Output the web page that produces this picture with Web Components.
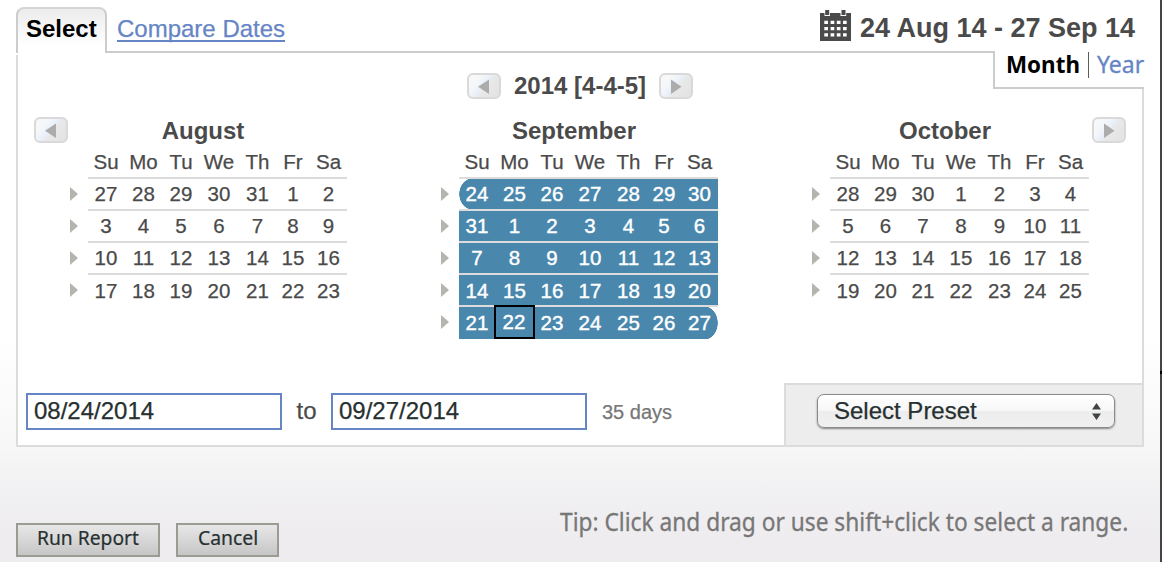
<!DOCTYPE html>
<html lang="en">
<head>
<meta charset="utf-8">
<title>Date range</title>
<style>
html,body{margin:0;height:100%}
body{font-family:"Liberation Sans",Arial,sans-serif;color:#4a4a4a;overflow:hidden}
</style>
</head>
<body>
<date-range-picker></date-range-picker>
<script>
const define = (name, html, setup) => {
  const tpl = document.createElement('template');
  customElements.define(name, class extends HTMLElement {
    connectedCallback() {
      if (this.shadowRoot) return;
      tpl.innerHTML = typeof html === 'function' ? html(this) : html;
      this.attachShadow({mode: 'open'}).appendChild(tpl.content.cloneNode(true));
      if (setup) setup(this);
    }
  });
};

/* Text set to an exact measure: the w attribute is its width in pixels. */
define('fit-text', el => `<style>
:host{display:inline-block;white-space:nowrap;width:${el.getAttribute('w')}px;flex:none}
span{display:inline-block;transform-origin:0 50%}
</style><span>${el.textContent}</span>`, el => {
  const s = el.shadowRoot.querySelector('span');
  s.style.transform = `scaleX(${el.getAttribute('w') / s.offsetWidth})`;
});

define('arrow-button', el => `<style>
:host{display:block;flex:none;width:34px;height:26px}
svg{display:block}
</style><svg width="34" height="26" viewBox="0 0 34 26">
<defs><linearGradient id="g" x1="0" y1="0.2" x2="1" y2="0.8"><stop offset=".1" stop-color="#f8f8f8"/><stop offset=".3" stop-color="#f3f6fa"/><stop offset=".45" stop-color="#e9f0fa"/><stop offset=".58" stop-color="#e8e8e8"/><stop offset="1" stop-color="#e3e3e3"/></linearGradient></defs>
<rect x="1" y="1" width="32" height="24" rx="5" fill="url(#g)" stroke="#d9d9d9" stroke-width="2"/>
<path d="${el.getAttribute('dir') === 'next' ? 'M12 6.500V21L22.500 13.700Z' : 'M22 6.500V21L11 13.700Z'}" fill="#acacac"/></svg>`);

define('calendar-icon', `<style>:host{display:block;width:31px;height:31px;flex:none}svg{display:block}</style>
<svg width="31" height="31" viewBox="0 0 31 31"><path fill="#4a4a4a" d="M0 3H4.500V6H10V3H20.500V6H26.200V3H31V31H0Z"/>
<path fill="#4a4a4a" d="M5.200 0H9.200V5H5.200ZM21.500 0H25.500V5H21.500Z"/>
<g fill="#fff"><path d="M4.300 10.700h3.700v3.300h-3.700zM10.600 10.700h3.700v3.300h-3.700zM16.800 10.700h3.700v3.300h-3.700zM23 10.700h3.700v3.300h-3.700zM4.300 17h3.700v3.300h-3.700zM10.600 17h3.700v3.300h-3.700zM16.800 17h3.700v3.300h-3.700zM23 17h3.700v3.300h-3.700zM4.300 23.200h3.700v3.300h-3.700zM10.600 23.200h3.700v3.300h-3.700zM16.800 23.200h3.700v3.300h-3.700zM23 23.200h3.700v3.300h-3.700z"/></g></svg>`);

define('month-grid', el => {
  const rows = el.getAttribute('weeks').split('|').map(r => r.split(' '));
  const sel = el.hasAttribute('selected');
  const week = (r, i) => `<div class="week${i === rows.length - 1 ? ' last' : ''}${i > 2 ? ' low' : ''}">
    <svg width="8" height="14" viewBox="0 0 8 14"><path d="M0 0L8 7L0 14Z" fill="#b5b5ae"/></svg>
    <div class="days${sel && i === 0 ? ' from' : ''}${sel && i === 4 ? ' to' : ''}">${r.map(d => `<span${sel && i === 4 && d === '22' ? ' class="today"' : ''}>${d}</span>`).join('')}</div></div>`;
  return `<style>
:host{display:block;flex:none;width:279px}
h3{margin:0 9px 0 0;font-size:24px;line-height:28px;height:30px;text-align:center}
.head,.days{display:grid;grid-template-columns:36px 39px 36px 40px 37px 34px 37px;text-align:center;font-size:20.5px;-webkit-text-stroke:.25px}
.head{margin-left:20px;height:30px;line-height:30px;border-bottom:2px solid #dcdcdc}
.week{display:flex}
.week svg{flex:none;margin:8px 10px 0 2px}
.days{line-height:30px;height:30px;border-bottom:2px solid #dcdcdc}
.low .days{line-height:31px}
.last .days{border:0;height:32px;line-height:32px}
.sel .days{background:#4987ad padding-box;color:#fff}
.sel .days{-webkit-text-stroke:.4px #fff}
.sel .from{background:radial-gradient(ellipse 14px 16px at 14px 15px,#4987ad 96%,#fff 100%) 0 0/14px 30px no-repeat,linear-gradient(#4987ad,#4987ad) 14px 0/245px 30px no-repeat}
.sel .to{background:radial-gradient(ellipse 14px 17px at 0 16px,#4987ad 96%,#fff 100%) 245px 0/14px 32px no-repeat,linear-gradient(#4987ad,#4987ad) 0 0/245px 32px no-repeat}
.today{box-sizing:border-box;border:2px solid #000;margin:-2px -1px 0;height:34px;line-height:30px;padding-right:1px;z-index:1}
</style><h3><slot></slot></h3>
<div class="head"><span>Su</span><span>Mo</span><span>Tu</span><span>We</span><span>Th</span><span>Fr</span><span>Sa</span></div>
<div class="${sel ? 'sel' : ''}">${rows.map(week).join('')}</div>`;
});

define('date-field', `<style>
:host{display:block;box-sizing:border-box;flex:none;width:256px;height:37px;border:2px solid #6685c5;background:#fff;padding-left:6px;font-size:24px;line-height:32px;color:#263030;-webkit-text-stroke:.25px}
</style><slot></slot>`);

define('preset-select', `<style>
:host{display:flex;box-sizing:border-box;width:298px;height:34px;border:1px solid #8a8a8a;border-radius:7px;background:linear-gradient(#fff,#f7f7f7 49%,#ededed 51%,#f0f0f0);box-shadow:0 1px 2px rgba(0,0,0,.45);padding:0 13px 0 16px;justify-content:space-between;align-items:center;font-size:24px;line-height:32px;color:#263030;-webkit-text-stroke:.25px}
svg{display:block}
</style><slot></slot><svg width="9" height="17" viewBox="0 0 9 17"><path d="M0 6.500L4.500 0L9 6.500ZM0 10.500H9L4.500 17Z" fill="#404544"/></svg>`);

define('action-button', `<style>
:host{display:flex;box-sizing:border-box;height:34px;border:2px solid #9a9b91;background:linear-gradient(#e7e7e7,#c6c6c6);justify-content:center;font:20px/25px "Noto Sans","Open Sans",sans-serif;color:#263030;-webkit-text-stroke:.2px}
</style><slot></slot>`);

define('date-range-picker', `<style>
:host{display:flex;width:1162px;height:562px;background:linear-gradient(#fff 340px,#f7f7f7 447px,#f1f0f2 490px,#eeecef 540px)}
.page{width:1128px;padding:7px 16px 0;display:flex;flex-direction:column}
.edge{width:2px;background:linear-gradient(#444 0 371px,#000 371px 374px,#444 374px)}
.top{display:flex;height:44px}
.tab{box-sizing:border-box;width:91px;height:46px;border:2px solid #ccc;border-color:#d4d4d4 #ccc;border-bottom:0;border-radius:8px 8px 0 0;background:linear-gradient(#ececec,#fff 85%);padding-left:8px;font:bold 24px/39px "Liberation Sans",sans-serif;color:#000}
.compare{margin:7px auto 0 10px;height:26px;font-size:24px;line-height:29px;color:#6685c5;border-bottom:2px solid #6685c5;-webkit-text-stroke:.25px}
calendar-icon{margin:3px 9px 0 0}
.range{font-weight:bold;font-size:27px;line-height:42px;margin-right:9px}
.shelf{display:flex;height:38px}
.stub{width:89px;margin-top:4px;border-left:2px solid #dcdcdc}
.rule{flex:1;border-top:2px solid #ccc;border-right:2px solid #ccc}
.view{box-sizing:border-box;width:149px;border-bottom:2px solid #ccc;display:flex;padding-left:11px;font:23px/26px "Noto Sans","Open Sans",sans-serif}
.view b{color:#000}.view .yr{color:#6685c5;-webkit-text-stroke:.3px}
.bar{width:2px;height:26px;background:#5c5c5c;margin:1px 8px 0 8px}
.panel{box-sizing:border-box;height:358px;border:2px solid #dcdcdc;border-top:0;background:#fff;display:flex;flex-direction:column}
.year{display:flex;justify-content:space-between;width:226px;margin:-16px auto 0;font:bold 24px/26px "Liberation Sans",sans-serif}
.months{display:flex;margin:18px 0 0 16px}
.months month-grid+month-grid{margin-left:92px}
.months arrow-button:last-child{margin-left:3px}
.foot{display:flex;margin-top:auto;height:62px}
.fields{flex:1;display:flex;padding:10px 0 0 8px}
.to{width:49px;text-align:center;font-size:24px;line-height:36px;-webkit-text-stroke:.25px}
.days{margin-left:15px;font-size:20px;line-height:38px;color:#777;-webkit-text-stroke:.25px}
.preset{box-sizing:border-box;width:358px;border:2px solid #dcdcdc;border-width:2px 0 0 2px;background:#ededed;padding:9px 0 0 31px}
.actions{display:flex;padding-top:76px}
.actions action-button{margin-right:16px}
.tip{margin:-16px 16px 0 auto;font:25px/28px "Noto Sans","Open Sans",sans-serif;color:#777;-webkit-text-stroke:.3px}
</style>
<div class="page">
 <div class="top">
  <div class="tab"><fit-text w="71">Select</fit-text></div>
  <div class="compare"><fit-text w="168">Compare Dates</fit-text></div>
  <calendar-icon></calendar-icon>
  <div class="range"><fit-text w="275">24 Aug 14 - 27 Sep 14</fit-text></div>
 </div>
 <div class="shelf"><div class="stub"></div><div class="rule"></div>
  <div class="view"><b><fit-text w="74">Month</fit-text></b><div class="bar"></div><span class="yr"><fit-text w="47">Year</fit-text></span></div>
 </div>
 <div class="panel">
  <div class="year"><arrow-button dir="prev"></arrow-button><fit-text w="132">2014 [4-4-5]</fit-text><arrow-button dir="next"></arrow-button></div>
  <div class="months">
   <arrow-button dir="prev"></arrow-button>
   <month-grid weeks="27 28 29 30 31 1 2|3 4 5 6 7 8 9|10 11 12 13 14 15 16|17 18 19 20 21 22 23">August</month-grid>
   <month-grid selected weeks="24 25 26 27 28 29 30|31 1 2 3 4 5 6|7 8 9 10 11 12 13|14 15 16 17 18 19 20|21 22 23 24 25 26 27">September</month-grid>
   <month-grid weeks="28 29 30 1 2 3 4|5 6 7 8 9 10 11|12 13 14 15 16 17 18|19 20 21 22 23 24 25">October</month-grid>
   <arrow-button dir="next"></arrow-button>
  </div>
  <div class="foot">
   <div class="fields"><date-field>08/24/2014</date-field><div class="to">to</div><date-field>09/27/2014</date-field><div class="days">35 days</div></div>
   <div class="preset"><preset-select>Select Preset</preset-select></div>
  </div>
 </div>
 <div class="actions">
  <action-button style="width:144px"><fit-text w="102">Run Report</fit-text></action-button>
  <action-button style="width:103px"><fit-text w="60">Cancel</fit-text></action-button>
  <div class="tip"><fit-text w="568">Tip: Click and drag or use shift+click to select a range.</fit-text></div>
 </div>
</div>
<div class="edge"></div>`);
</script>
</body>
</html>
